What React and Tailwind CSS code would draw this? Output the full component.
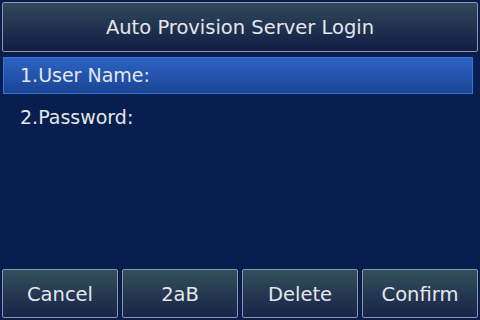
import React from 'react';

const buttons = ['Cancel', '2aB', 'Delete', 'Confirm'];

function App() {
  return (
    <div
      className="w-[480px] h-[320px] bg-[#071e4e] flex flex-col text-[#e4e6ea] overflow-hidden"
      style={{ fontFamily: '"DejaVu Sans", "Noto Sans", sans-serif' }}
    >
      <div className="mx-[2px] mt-[2px] h-[50px] flex items-center justify-center border border-[#8c98a4] rounded-[2px] bg-gradient-to-b from-[#32495a] to-[#121c44] text-[19.5px] pt-[1px]">
        Auto Provision Server Login
      </div>
      <div className="mt-[5px] ml-[3px] mr-[7px] h-[37px] flex items-center pl-[16px] border border-[#3a72d0] bg-gradient-to-b from-[#2c63c4] to-[#1a4596] text-[19px]">
        1.User Name:
      </div>
      <div className="h-[46px] flex items-center pl-[20px] text-[19px]">
        2.Password:
      </div>
      <div className="flex-1" />
      <div className="flex gap-[4px] px-[2px] pb-[2px]">
        {buttons.map((b) => (
          <div
            key={b}
            className="w-[116px] h-[49px] flex items-center justify-center border border-[#8c98a4] rounded-[2px] bg-gradient-to-b from-[#34505c] to-[#182246] text-[19.5px] pt-[2px]"
          >
            {b}
          </div>
        ))}
      </div>
    </div>
  );
}

export default App;
